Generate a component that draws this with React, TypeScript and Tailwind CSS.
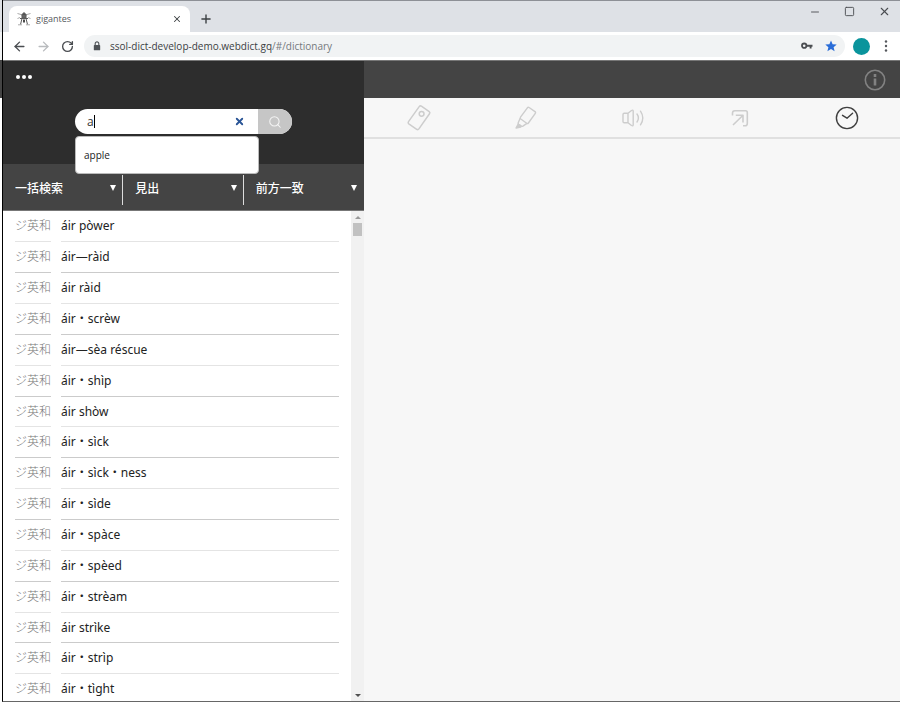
import React, { useState } from 'react';
import { ArrowLeft, ArrowRight, RotateCw, Plus, X, Minus, Square, Search } from 'lucide-react';

const RESULTS = [
    'áir pòwer',
    'áir—ràid',
    'áir ràid',
    'áir・scrèw',
    'áir—sèa réscue',
    'áir・shìp',
    'áir shòw',
    'áir・sìck',
    'áir・sìck・ness',
    'áir・sìde',
    'áir・spàce',
    'áir・spèed',
    'áir・strèam',
    'áir strìke',
    'áir・strìp',
    'áir・tìght',
];

const FILTERS = [
    { id: 'scope', label: '検索範囲', options: ['一括検索', '個別検索'] },
    { id: 'target', label: '検索対象', options: ['見出', '全文'] },
    { id: 'match', label: '一致条件', options: ['前方一致', '後方一致', '完全一致'] },
];

const Lighthouse = () => (
    <svg viewBox="0 0 14 14" className="h-[14px] w-[14px]" fill="none" stroke="#5a5a5a" strokeWidth="1">
        <path d="M7 0.500 4.500 3h5z" fill="#4a4a4a" />
        <path d="M5 3v3h4V3" fill="#666" />
        <path d="M3 6.500h8M5 6.500 3.500 12.500M9 6.500l1.500 6" />
        <path d="M0.500 1.500 4 2.500M13.500 1.500 10 2.500M0.500 6.500 3 5.500M13.500 6.500 11 5.500M1 12.800h4M9 12.800h4" stroke="#aaa" />
        <path d="M6 7.500h2v3H6z" fill="#4a4a4a" stroke="none" />
    </svg>
);

const LockIcon = () => (
    <svg viewBox="0 0 8 11" className="h-[10px] w-[8px]">
        <path d="M2 5V3a2 2 0 0 1 4 0v2" fill="none" stroke="#4f5357" strokeWidth="1.2" />
        <rect x="0.5" y="4.3" width="7" height="6" rx="0.8" fill="#4f5357" />
    </svg>
);

const KeyIcon = () => (
    <svg viewBox="0 0 12 8" className="h-[8px] w-[12px]" fill="none" stroke="#4a4d51">
        <circle cx="3.2" cy="3.7" r="2.2" strokeWidth="1.8" />
        <path d="M5.4 3.7H11.5M9.6 3.7v2.8" strokeWidth="1.9" />
    </svg>
);

const StarIcon = () => (
    <svg viewBox="0 0 12 12" className="h-[12px] w-[12px]">
        <path d="m6 .4 1.6 3.8 4.1.3-3.1 2.7 1 4L6 9.1l-3.6 2.1 1-4L.3 4.5l4.1-.3z" fill="#2a6dd8" />
    </svg>
);

const TagIcon = () => (
    <svg viewBox="0 0 26 28" className="h-[28px] w-[26px]" fill="none" stroke="currentColor" strokeWidth="1.5" strokeLinejoin="round">
        <path d="M13.2 2.600q.9-1.200 2.200-.4l7.800 5.400q1.200.9.3 2.200L12.900 24.900q-.9 1.200-2.200.4L2.800 19.800q-1.200-.9-.3-2.200z" />
        <circle cx="15.600" cy="9.800" r="2.400" />
    </svg>
);

const MarkerIcon = () => (
    <svg viewBox="0 0 24 26" className="h-[26px] w-[24px]" fill="none" stroke="currentColor" strokeWidth="1.4" strokeLinejoin="round">
        <path d="M13.400 2.800q.7-.9 1.700-.3l5.900 4.100q1 .7.3 1.700l-6.900 9.700q-.7.9-1.700.3L6.800 14q-1-.8-.3-1.800z" />
        <path d="m6.200 13.300-2 4.500q-.3 1 .5 1.600l2.600 1.700q.8.500 1.600 0l4-2.700" />
        <path d="m4.200 19-2.200 4 4.800-.9-.2-1.600z" fill="currentColor" />
    </svg>
);

const SpeakerIcon = () => (
    <svg viewBox="0 0 24 20" className="h-[20px] w-[24px]" fill="none" stroke="currentColor" strokeWidth="1.400" strokeLinejoin="round" strokeLinecap="round">
        <path d="M7 5.300H3.200Q2 5.300 2 6.500v7q0 1.200 1.200 1.200H7zM7 5.300l3.500-2.800q1.700-1 1.700.8v13.400q0 1.800-1.700.8L7 14.700" />
        <path d="M16 6q2.800 4 0 8M19.500 3.200q4.600 6.800 0 13.600" />
    </svg>
);

const JumpIcon = () => (
    <svg viewBox="0 0 20 20" className="h-[20px] w-[20px]" fill="none" stroke="currentColor" strokeWidth="1.600" strokeLinejoin="round">
        <path d="M2.500 7.500V5q0-2.300 2.300-2.300h10.900Q17.300 2.700 17.300 4.500v10.900q0 2.300-2.300 2.300h-2" />
        <path d="M3 17 12.500 7.800M5.800 7.200h7.200v7.300" />
    </svg>
);

const ClockIcon = () => (
    <svg viewBox="0 0 24 24" className="h-[24px] w-[24px]" fill="none" stroke="#3f3f3f" strokeWidth="1.400" strokeLinecap="round" strokeLinejoin="round">
        <circle cx="12" cy="12" r="10.600" />
        <path d="m7.500 9.300 4.500 2.900 5.600-5" />
    </svg>
);

const InfoIcon = () => (
    <svg viewBox="0 0 22 22" className="h-[22px] w-[22px]" fill="none" stroke="#828282">
        <circle cx="11" cy="11" r="9.700" strokeWidth="1.600" />
        <path d="M11 5v3M11 9.500v7" strokeWidth="2.600" />
    </svg>
);

const TOOLS = [
    { label: '付箋', icon: TagIcon },
    { label: 'マーカー', icon: MarkerIcon },
    { label: '音声', icon: SpeakerIcon },
    { label: 'ジャンプ', icon: JumpIcon },
    { label: '履歴', icon: ClockIcon },
];

const BrowserChrome: React.FC = () => (
    <header className="shrink-0 border-t border-[#8d9096]">
        <div className="flex h-[31px] items-end bg-[#dee1e6] pl-[6px]">
            <div className="flex h-[26px] w-[181px] items-center rounded-t-lg bg-white pr-[8px] pl-[8px]">
                <Lighthouse />
                <span className="ml-[5px] flex-1 text-[9px] text-[#55585c]">gigantes</span>
                <button aria-label="タブを閉じる" className="text-[#3c4043]">
                    <X size={10} strokeWidth={2.5} />
                </button>
            </div>
            <button aria-label="新しいタブ" className="mb-[6px] ml-[9px] text-[#3c4043]">
                <Plus size={14} strokeWidth={2.4} />
            </button>
            <div className="mb-[14px] ml-auto flex items-center gap-[23px] pr-[9px] text-[#4a4d51]">
                <button aria-label="最小化"><Minus size={12} strokeWidth={1.8} /></button>
                <button aria-label="最大化"><Square size={11} strokeWidth={2} /></button>
                <button aria-label="閉じる"><X size={13} strokeWidth={2} /></button>
            </div>
        </div>
        <div className="flex h-[28px] items-center bg-white pr-[12px] pl-[9px]">
            <button aria-label="戻る" className="text-[#4a4d51]"><ArrowLeft size={15} strokeWidth={2.2} /></button>
            <button aria-label="進む" className="ml-[9px] text-[#b9bbbe]"><ArrowRight size={15} strokeWidth={2.2} /></button>
            <button aria-label="再読み込み" className="ml-[10px] text-[#4a4d51]"><RotateCw size={13} strokeWidth={2.5} /></button>
            <div className="ml-[10px] flex h-[22px] flex-1 items-center rounded-full bg-[#f1f3f4] pr-[8px] pl-[9px]">
                <LockIcon />
                <p className="ml-[9px] flex-1 text-[10px] text-[#3c4043]">
                    ssol-dict-develop-demo.webdict.gq<span className="text-[#75797d]">/#/dictionary</span>
                </p>
                <button aria-label="パスワード"><KeyIcon /></button>
                <button aria-label="ブックマーク" className="ml-[12px]"><StarIcon /></button>
            </div>
            <button aria-label="プロフィール" className="ml-[8px] h-[17px] w-[17px] rounded-full bg-[#0a949c]" />
            <button aria-label="メニュー" className="ml-[14px]">
                <svg viewBox="0 0 4 12" className="h-[12px] w-[4px]" fill="#55585c">
                    <circle cx="2" cy="1.500" r="1.200" />
                    <circle cx="2" cy="6" r="1.200" />
                    <circle cx="2" cy="10.500" r="1.200" />
                </svg>
            </button>
        </div>
    </header>
);

const SearchBox: React.FC = () => {
    const [query, setQuery] = useState('a');

    return (
        <form className="relative mx-[72px] mt-[24px]" onSubmit={e => e.preventDefault()}>
            <div className="flex h-[25px] overflow-hidden rounded-full bg-white">
                <div className="relative flex flex-1 items-center">
                    <input
                        aria-label="検索語"
                        value={query}
                        onChange={e => setQuery(e.target.value)}
                        className="h-full w-full min-w-0 bg-transparent pl-[12px] text-[12px] text-[#333] caret-transparent outline-none"
                    />
                    {query === 'a' && <span className="absolute left-[19px] h-[13px] w-px bg-black" />}
                    <button type="button" aria-label="消去" onClick={() => setQuery('')} className="mr-[13px] text-[#2a5596]">
                        <X size={11} strokeWidth={4} />
                    </button>
                </div>
                <button aria-label="検索" className="flex w-[34px] items-center justify-center bg-[#c6c6c6] text-[#f5f5f5]">
                    <Search size={14} strokeWidth={1.8} />
                </button>
            </div>
            <ul className="absolute top-[27px] right-[33px] left-0 z-10 rounded-sm border border-[#bbb] bg-white py-[9px]">
                <li className="px-[8px] text-[10px] leading-[18px] text-[#222]">apple</li>
            </ul>
        </form>
    );
};

const Filters = () => (
    <div className="flex h-[46px] bg-[#444]">
        {FILTERS.map(({ id, label, options }) => (
            <div key={id} className="relative flex-1 pt-[11px] pb-[5px] not-last:after:absolute not-last:after:top-[11px] not-last:after:right-0 not-last:after:h-[30px] not-last:after:w-px not-last:after:bg-[#ddd]">
                <select
                    aria-label={label}
                    className="h-[23px] w-full appearance-none bg-transparent pl-[12px] text-[12px] font-medium text-white outline-none"
                >
                    {options.map(o => <option key={o} className="text-black">{o}</option>)}
                </select>
                <svg viewBox="0 0 6 6" className="pointer-events-none absolute top-[21px] right-[7px] h-[6px] w-[6px]" fill="#fff">
                    <path d="M0 0h6L3 6z" />
                </svg>
            </div>
        ))}
    </div>
);

const ResultList = () => (
    <div className="flex min-h-0 flex-1 border-t border-[#777] bg-white">
        <ul className="flex-1 overflow-hidden pr-[12px] pl-[12px]">
            {RESULTS.map(word => (
                <li key={word} className="flex h-[31px] gap-[10px] text-[12px] nth-[7n]:h-[30px] odd:text-[#e4e4e4] even:text-[#cbcbcb]">
                    <span className="w-[36px] border-b border-current leading-[29px]">
                        <span className="font-light text-[#777]">ジ英和</span>
                    </span>
                    <a href="#/dictionary" className="flex-1 border-b border-current font-['Noto_Sans','Noto_Sans_CJK_JP',sans-serif] leading-[29px]">
                        <span className="text-[#222]">{word}</span>
                    </a>
                </li>
            ))}
        </ul>
        {/* scrollbar */}
        <div className="flex w-[13px] flex-col items-center bg-[#f1f1f1] pt-[5px] pb-[4px]">
            <svg viewBox="0 0 6 3" className="h-[3px] w-[6px]" fill="#999"><path d="M0 3h6L3 0z" /></svg>
            <div className="mt-[4px] h-[13px] w-[9px] bg-[#c1c1c1]" />
            <svg viewBox="0 0 6 3" className="mt-auto h-[3px] w-[6px]" fill="#505050"><path d="M0 0h6L3 3z" /></svg>
        </div>
    </div>
);

export default function App() {
    return (
        <div className="flex h-screen overflow-hidden bg-white font-['Open_Sans','Noto_Sans_CJK_JP',sans-serif]">
            {/* sliver of the window behind */}
            <div className="w-[2px] shrink-0">
                <div className="h-[32px] bg-[#dee1e6]" />
                <div className="h-[28px] bg-[#f1f3f4]" />
                <div className="h-[38px] bg-[#444]" />
            </div>
            <div className="flex min-w-0 flex-1 flex-col border-b border-l border-b-[#666] border-l-black">
                <BrowserChrome />
                <div className="flex min-h-0 flex-1 border-t border-[#777]">
                    <aside className="flex w-[361px] shrink-0 flex-col">
                        <div className="h-[103px] bg-[#2d2d2d]">
                            <button aria-label="メニューを開く" className="mt-[13px] ml-[13px] flex h-[11px] items-start gap-[2px] pt-[1px]">
                                <span className="h-[4px] w-[4px] rounded-full bg-white" />
                                <span className="h-[4px] w-[4px] rounded-full bg-white" />
                                <span className="h-[4px] w-[4px] rounded-full bg-white" />
                            </button>
                            <SearchBox />
                        </div>
                        <Filters />
                        <ResultList />
                    </aside>
                    <main className="flex min-w-0 flex-1 flex-col bg-[#f7f7f7]">
                        <div className="flex h-[37px] items-center justify-end bg-[#444] pr-[14px]">
                            <button aria-label="情報"><InfoIcon /></button>
                        </div>
                        <nav className="grid h-[41px] grid-cols-5 border-b-2 border-[#e0e0e0] pl-[2px] text-[#cdcdcd]">
                            {TOOLS.map(({ label, icon: Icon }) => (
                                <button key={label} aria-label={label} className="flex items-center justify-center">
                                    <Icon />
                                </button>
                            ))}
                        </nav>
                    </main>
                </div>
            </div>
        </div>
    );
}
